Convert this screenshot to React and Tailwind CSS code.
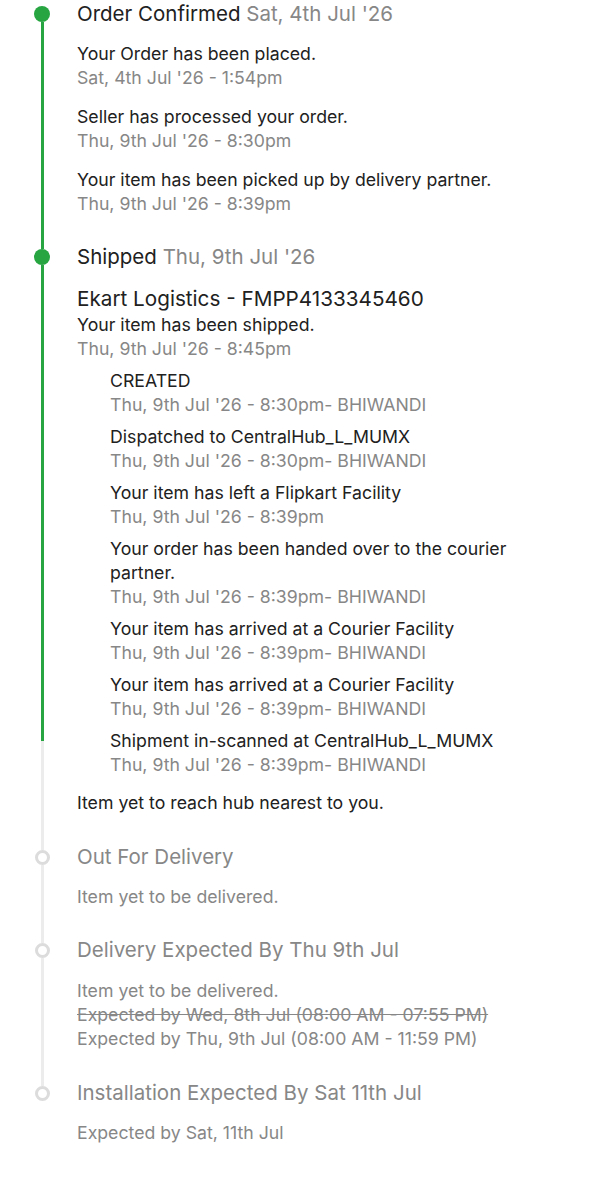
const GREEN = "bg-[#26a541]";

const Dot = ({ done }) =>
  done ? (
    <div className="h-4 w-4 shrink-0 rounded-full bg-[#26a541]" />
  ) : (
    <div className="h-[15px] w-[15px] shrink-0 rounded-full border-[3px] border-[#dcdcdc] bg-white" />
  );

const Line = ({ done, className = "" }) => (
  <div className={`w-[3px] ${done ? GREEN : "bg-[#ececec]"} ${className}`} />
);

const Entry = ({ text, date }) => (
  <div className="text-[17.7px] leading-[24px]">
    <p className="text-[#212121]">{text}</p>
    <p className="text-[#878787]">{date}</p>
  </div>
);

const subEvents = [
  ["CREATED", "Thu, 9th Jul '26 - 8:30pm- BHIWANDI"],
  ["Dispatched to CentralHub_L_MUMX", "Thu, 9th Jul '26 - 8:30pm- BHIWANDI"],
  ["Your item has left a Flipkart Facility", "Thu, 9th Jul '26 - 8:39pm"],
  [
    "Your order has been handed over to the courier partner.",
    "Thu, 9th Jul '26 - 8:39pm- BHIWANDI",
  ],
  ["Your item has arrived at a Courier Facility", "Thu, 9th Jul '26 - 8:39pm- BHIWANDI"],
  ["Your item has arrived at a Courier Facility", "Thu, 9th Jul '26 - 8:39pm- BHIWANDI"],
  ["Shipment in-scanned at CentralHub_L_MUMX", "Thu, 9th Jul '26 - 8:39pm- BHIWANDI"],
];

export default function App() {
  return (
    <div
      className="min-h-[1199px] w-full bg-white pr-6"
      style={{ fontFamily: "Inter, 'Noto Sans', sans-serif" }}
    >
      {/* Order Confirmed */}
      <div className="flex">
        <div className="flex w-[77px] shrink-0 flex-col">
          <div className="ml-[34px] flex w-4 flex-1 flex-col items-center pt-[6px]">
            <Dot done />
            <Line done className="flex-1" />
          </div>
        </div>
        <div className="min-w-0 flex-1 pb-[27px]">
          <h2 className="text-[20.5px] leading-[28px] text-[#212121]">
            Order Confirmed <span className="text-[#878787]">Sat, 4th Jul '26</span>
          </h2>
          <div className="mt-[14px] flex flex-col gap-[15px]">
            <Entry text="Your Order has been placed." date="Sat, 4th Jul '26 - 1:54pm" />
            <Entry text="Seller has processed your order." date="Thu, 9th Jul '26 - 8:30pm" />
            <Entry
              text="Your item has been picked up by delivery partner."
              date="Thu, 9th Jul '26 - 8:39pm"
            />
          </div>
        </div>
      </div>

      {/* Shipped */}
      <div className="flex">
        <div className="flex w-[77px] shrink-0 flex-col">
          <div className="ml-[34px] flex w-4 flex-1 flex-col items-center">
            <Line done className="h-[6px]" />
            <Dot done />
            <Line done className="flex-1" />
            <Line className="h-[102px]" />
          </div>
        </div>
        <div className="min-w-0 flex-1 pb-[28px]">
          <h2 className="text-[20.5px] leading-[28px] text-[#212121]">
            Shipped <span className="text-[#878787]">Thu, 9th Jul '26</span>
          </h2>
          <p className="mt-[15px] text-[20.7px] leading-[26px] text-[#212121]">
            Ekart Logistics - FMPP4133345460
          </p>
          <div className="mt-[1px]">
            <Entry text="Your item has been shipped." date="Thu, 9th Jul '26 - 8:45pm" />
          </div>
          <div className="mt-[8px] flex flex-col gap-[8px] pl-[33px]">
            {subEvents.map(([t, d], i) => (
              <Entry key={i} text={t} date={d} />
            ))}
          </div>
          <p className="mt-[14px] text-[17.7px] leading-[24px] text-[#212121]">
            Item yet to reach hub nearest to you.
          </p>
        </div>
      </div>

      {/* Out For Delivery */}
      <div className="flex">
        <div className="flex w-[77px] shrink-0 flex-col">
          <div className="ml-[34px] flex w-4 flex-1 flex-col items-center">
            <Line className="h-[7px]" />
            <Dot />
            <Line className="flex-1" />
          </div>
        </div>
        <div className="min-w-0 flex-1 pb-[27px]">
          <h2 className="text-[20.5px] leading-[28px] text-[#878787]">Out For Delivery</h2>
          <p className="mt-[14px] text-[17.7px] leading-[24px] text-[#878787]">
            Item yet to be delivered.
          </p>
        </div>
      </div>

      {/* Delivery Expected */}
      <div className="flex">
        <div className="flex w-[77px] shrink-0 flex-col">
          <div className="ml-[34px] flex w-4 flex-1 flex-col items-center">
            <Line className="h-[7px]" />
            <Dot />
            <Line className="flex-1" />
          </div>
        </div>
        <div className="min-w-0 flex-1 pb-[28px]">
          <h2 className="text-[20.5px] leading-[28px] text-[#878787]">
            Delivery Expected By Thu 9th Jul
          </h2>
          <div className="mt-[15px] text-[17.7px] leading-[24px] text-[#878787]">
            <p>Item yet to be delivered.</p>
            <p className="line-through">Expected by Wed, 8th Jul (08:00 AM - 07:55 PM)</p>
            <p>Expected by Thu, 9th Jul (08:00 AM - 11:59 PM)</p>
          </div>
        </div>
      </div>

      {/* Installation Expected */}
      <div className="flex">
        <div className="flex w-[77px] shrink-0 flex-col">
          <div className="ml-[34px] flex w-4 flex-col items-center">
            <Line className="h-[7px]" />
            <Dot />
          </div>
        </div>
        <div className="min-w-0 flex-1 pb-10">
          <h2 className="text-[20.5px] leading-[28px] text-[#878787]">
            Installation Expected By Sat 11th Jul
          </h2>
          <p className="mt-[14px] text-[17.7px] leading-[24px] text-[#878787]">
            Expected by Sat, 11th Jul
          </p>
        </div>
      </div>
    </div>
  );
}
